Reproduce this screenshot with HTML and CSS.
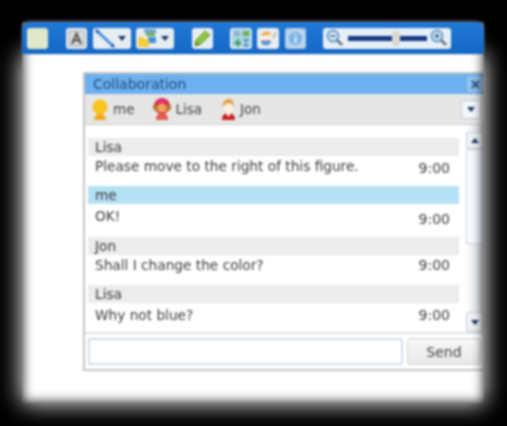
FILE: index.html
```html
<!DOCTYPE html>
<html lang="en">
<head>
    <meta charset="UTF-8">
    <meta name="viewport" content="width=device-width, initial-scale=1.0">
    <title>Collaboration</title>
    <link rel="stylesheet" href="styles.css">
</head>
<body>
    <div class="window">
        <div class="toolbar">
            <div class="tool tool-blank"></div>
            <div class="tool tool-text">
                <svg width="17" height="17" viewBox="0 0 17 17"><rect x="1" y="1" width="15" height="15" fill="#dcdcdc" stroke="#a8a8a8"/><path d="M4 14 8.500 3.500 13 14M5.800 10.500h5.400" fill="none" stroke="#555" stroke-width="2"/></svg>
            </div>
            <div class="tool tool-split tool-line">
                <svg width="23" height="20" viewBox="0 0 23 20"><path d="M4 3 20 18" stroke="#3f8be0" stroke-width="2.600"/><path d="M3 2 5.500 4.500M18.500 16.500 21 19" stroke="#2b5fa8" stroke-width="3"/></svg>
                <span class="arrow"></span>
            </div>
            <div class="tool tool-split tool-shape">
                <svg width="22" height="20" viewBox="0 0 22 20"><path d="M8 1h12v4H8z" fill="#6fa8c8"/><path d="M10 5h9v3h-9z" fill="#6fb04a"/><path d="M12 9h8v6h-8z" fill="#3f8fe0"/><path d="M2 19V10l4-2 2 3h5v8z" fill="#f4cc3c"/></svg>
                <span class="arrow"></span>
            </div>
            <div class="tool tool-pen">
                <svg width="19" height="19" viewBox="0 0 19 19"><path d="M2 17 3 11 12 2 17 6 8 15z" fill="#8cc63f" stroke="#6fa52c"/><path d="M2 17 3 12 7 16z" fill="#5f8f28"/></svg>
            </div>
            <div class="tool tool-grid">
                <svg width="21" height="20" viewBox="0 0 21 20"><rect x="1" y="1" width="19" height="18" fill="#a8d4e8"/><path d="M3 3h6v5H3z" fill="#8fb4c8"/><path d="M12 3h6v5h-6z" fill="#6fb04a"/><path d="M3 14h3v-3h2v3h2v2H8v3H6v-3H3z" fill="#3f9a4a"/><path d="M12 11h6l-3 4 3 4h-6l3-4z" fill="#4a90b8"/></svg>
            </div>
            <div class="tool tool-palette">
                <svg width="20" height="20" viewBox="0 0 20 20"><path d="M3 8c1-6 9-6 10-1z" fill="#f2b25c"/><path d="M3 8h10v4H3z" fill="#f8f4ec"/><path d="M3 12h10v1H3z" fill="#e88a80"/><path d="M3 13h10c0 6-10 6-10 0z" fill="#4f9ae6"/><path d="M14 9l4-6 1 1-3 7z" fill="#c8c0b0"/></svg>
            </div>
            <div class="tool tool-info">
                <svg width="19" height="19" viewBox="0 0 19 19"><circle cx="9.500" cy="9.500" r="8" fill="#7db6e8" stroke="#d4e4f2" stroke-width="1.500"/><path d="M9.500 5v1.500M9.500 8v6" stroke="#e8f2fa" stroke-width="2"/></svg>
            </div>
            <div class="zoom">
                <svg width="18" height="18" viewBox="0 0 18 18"><circle cx="7" cy="7" r="5.500" fill="#d6e6f4" stroke="#5f9ac8" stroke-width="1.800"/><path d="M4.500 7h5" stroke="#2d5c88" stroke-width="1.400"/><path d="M11 11l5 5" stroke="#56646e" stroke-width="2.400"/></svg>
                <div class="slider"><span class="thumb"></span></div>
                <svg width="18" height="18" viewBox="0 0 18 18"><circle cx="7" cy="7" r="5.500" fill="#d6e6f4" stroke="#5f9ac8" stroke-width="1.800"/><path d="M4.500 7h5M7 4.500v5" stroke="#2d5c88" stroke-width="1.400"/><path d="M11 11l5 5" stroke="#56646e" stroke-width="2.400"/></svg>
            </div>
        </div>

        <div class="panel">
            <div class="panel-title">
                <span>Collaboration</span>
                <span class="close">
                    <svg width="11" height="11" viewBox="0 0 11 11"><path d="M2 2l7 7M9 2l-7 7" stroke="#2a5580" stroke-width="2.200"/></svg>
                </span>
            </div>
            <div class="users">
                <div class="user">
                    <svg width="20" height="23" viewBox="0 0 20 23"><path d="M4 22c0-3 2-5 4-6h4c2 1 4 3 4 6z" fill="#f5a81a"/><circle cx="10" cy="9" r="7.500" fill="#f9c41e"/></svg>
                    <span>me</span>
                </div>
                <div class="user">
                    <svg width="20" height="23" viewBox="0 0 20 23"><path d="M4 22c0-5 2-7 6-7s6 2 6 7z" fill="#e0604a"/><circle cx="10" cy="8" r="8" fill="#c93a30"/><path d="M1 7h18v3c0 5-18 5-18 0z" fill="#b8762c"/><circle cx="10" cy="10" r="4.500" fill="#f2a060"/><path d="M5 2c2-2 8-2 10 0l1 3H4z" fill="#e8307a"/></svg>
                    <span>Lisa</span>
                </div>
                <div class="user">
                    <svg width="17" height="23" viewBox="0 0 17 23"><path d="M2 22c0-5 3-7 6.500-7s6.500 2 6.500 7z" fill="#c9201c"/><path d="M6 15h5l-2.500 4z" fill="#fff"/><circle cx="8.500" cy="10" r="4.500" fill="#fdeede"/><path d="M3 9c-1-5 3-8 6-8s5 3 5 8c-1-3-3-4-5-4s-5 1-6 4z" fill="#e09a3c"/></svg>
                    <span>Jon</span>
                </div>
                <span class="menu-btn"><span class="arrow"></span></span>
            </div>
            <div class="chat">
                <div class="messages">
                    <div class="msg">
                        <div class="msg-name">Lisa</div>
                        <div class="msg-body"><span>Please move to the right of this figure.</span><span class="time">9:00</span></div>
                    </div>
                    <div class="msg msg-tall">
                        <div class="msg-name msg-name-me">me</div>
                        <div class="msg-body msg-body-low"><span>OK!</span><span class="time time-down">9:00</span></div>
                    </div>
                    <div class="msg">
                        <div class="msg-name">Jon</div>
                        <div class="msg-body"><span>Shall I change the color?</span><span class="time time-up">9:00</span></div>
                    </div>
                    <div class="msg">
                        <div class="msg-name">Lisa</div>
                        <div class="msg-body msg-body-low"><span>Why not blue?</span><span class="time time-up">9:00</span></div>
                    </div>
                </div>
                <div class="scrollbar">
                    <span class="scroll-btn"><span class="arrow arrow-up"></span></span>
                    <span class="scroll-thumb"></span>
                    <span class="scroll-btn scroll-btn-down"><span class="arrow"></span></span>
                </div>
            </div>
            <div class="send-row">
                <input class="send-input" type="text">
                <button class="send-btn" type="button">Send</button>
            </div>
        </div>
    </div>
</body>
</html>
```

FILE: styles.css
```css
body {
    margin: 0;
    padding: 22px 23px 23px 22px;
    box-sizing: border-box;
    height: 426px;
    overflow: hidden;
    background-color: #000;
    font-family: 'DejaVu Sans', sans-serif;
    color: #3a3a3a;
}
.window {
    position: relative;
    height: 100%;
    background-color: #fff;
    filter: blur(0.8px);
}
/* soft white glow outside the edge, below the toolbar only */
.window::before {
    content: "";
    position: absolute;
    top: 32px;
    left: 0;
    right: 0;
    bottom: 0;
    box-shadow: 0 0 22px #fff;
    z-index: -1;
}
/* and the dark fade just inside the edge */
.window::after {
    content: "";
    position: absolute;
    top: 0;
    left: 0;
    right: 0;
    bottom: 0;
    box-shadow: inset 0 0 12px #000;
    pointer-events: none;
}

/* toolbar */
.toolbar {
    position: relative;
    z-index: 1;
    height: 32px;
    background: linear-gradient(#2178d6, #1468c6);
    border-radius: 8px 8px 0 0;
    box-shadow: 0 -1px 3px #666;
    display: flex;
    align-items: center;
    padding-left: 5px;
}
.tool {
    height: 21px;
    width: 21px;
    background-color: #e8edf2;
    border-radius: 3px;
    display: flex;
    align-items: center;
    justify-content: center;
}
.tool-blank {
    background-color: #dfe8c8;
}
.tool-text {
    margin-left: 18px;
}
.tool-split {
    width: 38px;
    justify-content: space-between;
    padding-right: 5px;
    box-sizing: border-box;
}
.tool-line {
    margin-left: 6px;
}
.tool-shape {
    margin-left: 5px;
}
.tool-pen {
    margin-left: 18px;
}
.tool-grid {
    margin-left: 17px;
    width: 22px;
}
.tool-palette {
    margin-left: 5px;
    width: 22px;
}
.tool-info {
    margin-left: 6px;
    background-color: #b4cfe8;
}
.arrow {
    display: block;
    width: 0;
    height: 0;
    border-left: 4px solid transparent;
    border-right: 4px solid transparent;
    border-top: 5px solid #17386a;
}
.arrow-up {
    border-top: 0;
    border-bottom: 5px solid #17386a;
}
.zoom {
    margin-left: 17px;
    width: 128px;
    height: 21px;
    background-color: #e8eef6;
    border-radius: 3px;
    display: flex;
    align-items: center;
    justify-content: space-between;
    padding: 0 3px;
    box-sizing: border-box;
}
.slider {
    width: 79px;
    height: 5px;
    background-color: #123a84;
    position: relative;
}
.thumb {
    position: absolute;
    left: 44px;
    top: -5px;
    width: 8px;
    height: 15px;
    border-radius: 3px;
    background-color: #d8d8d0;
}

/* collaboration panel */
.panel {
    margin: 18px 1px 0 61px;
    height: 299px;
    box-sizing: border-box;
    border: 2px solid #c4c4c4;
    border-right: 0;
    display: flex;
    flex-direction: column;
    background-color: #fff;
}
.panel-title {
    height: 20px;
    flex-shrink: 0;
    background-color: #6db0f0;
    color: #1f4a78;
    font-size: 14px;
    display: flex;
    align-items: center;
    justify-content: space-between;
    padding-left: 8px;
}
.close {
    width: 16px;
    height: 16px;
    background-color: #93c2ee;
    border-radius: 3px;
    display: flex;
    align-items: center;
    justify-content: center;
}
.users {
    height: 30px;
    flex-shrink: 0;
    background-color: #e6e6e6;
    border-bottom: 1px solid #ccc;
    display: flex;
    align-items: center;
    padding-left: 5px;
    font-size: 13.5px;
    color: #444;
}
.user {
    display: flex;
    align-items: center;
    gap: 3px;
    margin-right: 18px;
}
.menu-btn {
    margin-left: auto;
    margin-right: 2px;
    width: 20px;
    height: 19px;
    box-sizing: border-box;
    background-color: #f4f6f8;
    border: 1px solid #c0ccd8;
    border-radius: 3px;
    display: flex;
    align-items: center;
    justify-content: center;
}
.chat {
    flex: 1;
    display: flex;
    min-height: 0;
    border-bottom: 2px solid #dde1e6;
}
.messages {
    flex: 1;
    padding: 13px 7px 0 3px;
    font-size: 13.7px;
    color: #3a3a3a;
}
.msg {
    height: 48px;
}
.msg-tall {
    height: 51px;
}
.msg-name {
    height: 18px;
    line-height: 18px;
    padding-left: 7px;
    background-color: #ececec;
}
.msg-name-me {
    background-color: #b4e2f4;
}
.msg-body {
    display: flex;
    justify-content: space-between;
    padding: 2px 9px 0 7px;
}
.msg-body-low {
    padding-top: 4px;
}
.time {
    font-size: 14px;
    margin-top: 2px;
}
.time-up {
    margin-top: 0;
}
.time-down {
    margin-top: 3px;
}
.scrollbar {
    width: 17px;
    padding-top: 7px;
    background: linear-gradient(90deg, #fff, #d4d6dc);
    display: flex;
    flex-direction: column;
}
.scroll-btn {
    height: 17px;
    flex-shrink: 0;
    background-color: #f0f2f6;
    border: 1px solid #c4cedc;
    border-radius: 2px;
    box-sizing: border-box;
    display: flex;
    align-items: center;
    justify-content: center;
}
.scroll-thumb {
    height: 95px;
    background: linear-gradient(90deg, #fff, #e6ecf6);
    border: 1px solid #c8d0e0;
    border-radius: 2px;
    box-sizing: border-box;
}
.scroll-btn-down {
    margin-top: auto;
    height: 20px;
}
.send-row {
    height: 35px;
    flex-shrink: 0;
    display: flex;
    align-items: center;
    gap: 4px;
    padding: 0 2px 0 3px;
}
.send-input {
    flex: 1;
    min-width: 0;
    height: 27px;
    box-sizing: border-box;
    border: 2px solid #d4dcea;
    border-radius: 2px;
    background-color: #fff;
}
.send-btn {
    width: 74px;
    height: 27px;
    font-family: inherit;
    font-size: 14px;
    color: #444;
    background: linear-gradient(#f8f8f8, #e8e8e8);
    border: 1px solid #ccd4de;
    border-radius: 3px;
}
```
